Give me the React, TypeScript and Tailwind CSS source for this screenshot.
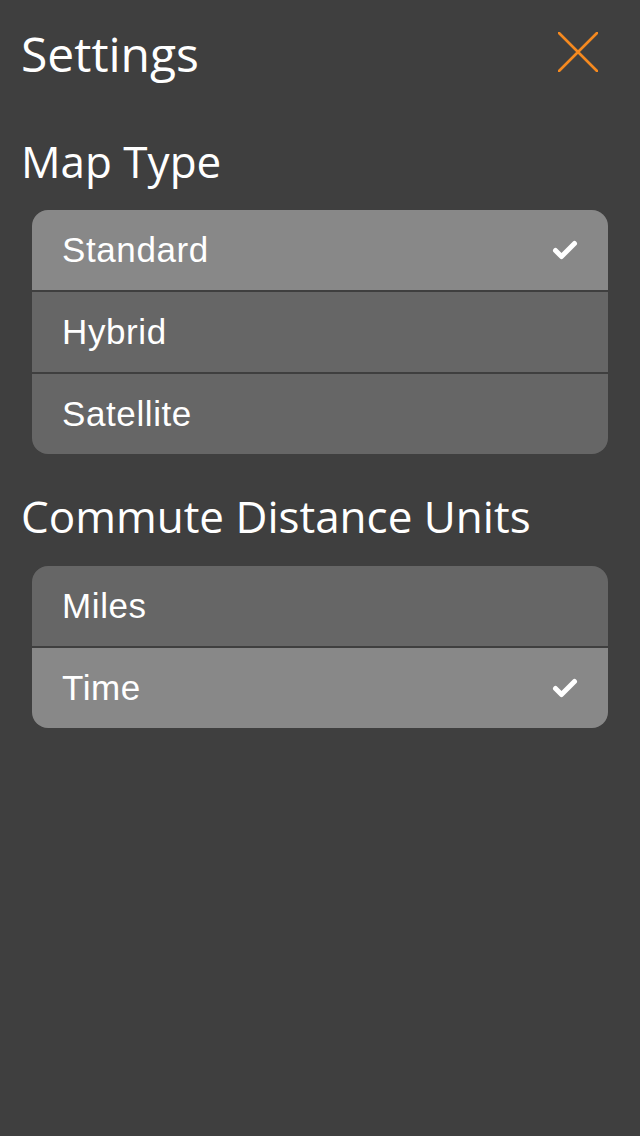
import { useState } from 'react';

const mapTypes = ['Standard', 'Hybrid', 'Satellite'];
const units = ['Miles', 'Time'];

function CheckMark() {
  return (
    <svg width="26" height="20" viewBox="0 0 26 20" fill="none">
      <path
        d="M3.5 10.5 L9.5 16.5 L22.5 3.5"
        stroke="white"
        strokeWidth="5"
        strokeLinecap="round"
        strokeLinejoin="round"
      />
    </svg>
  );
}

function OptionList({
  options,
  selected,
  onSelect,
}: {
  options: string[];
  selected: string;
  onSelect: (v: string) => void;
}) {
  return (
    <div className="mx-[32px] flex flex-col gap-[2px] overflow-hidden rounded-[16px] bg-[#3f3f3f]">
      {options.map((opt) => (
        <button
          key={opt}
          type="button"
          onClick={() => onSelect(opt)}
          className={`flex h-[80px] items-center justify-between pl-[30px] pr-[30px] text-left text-[35px] tracking-[0.6px] text-white ${
            opt === selected ? 'bg-[#888888]' : 'bg-[#666666]'
          }`}
          style={{ fontFamily: '"Liberation Sans", Arial, sans-serif' }}
        >
          <span>{opt}</span>
          {opt === selected && <CheckMark />}
        </button>
      ))}
    </div>
  );
}

export default function App() {
  const [mapType, setMapType] = useState('Standard');
  const [unit, setUnit] = useState('Time');

  return (
    <main
      className="min-h-[1136px] w-full bg-[#3f3f3f] text-white"
      style={{ fontFamily: '"Open Sans", sans-serif' }}
    >
      <header className="flex h-[108px] items-center justify-between pl-[21px] pr-[42px]">
        <h1 className="text-[48px] leading-[48px]">Settings</h1>
        <button type="button" className="-mt-[4px]" aria-label="Close">
          <svg width="40" height="40" viewBox="0 0 40 40">
            <path d="M1 1 L39 39 M39 1 L1 39" stroke="#f5891f" strokeWidth="2.6" strokeLinecap="round" />
          </svg>
        </button>
      </header>

      <h2 className="pl-[21px] pt-[31px] pb-[27px] text-[44px] leading-[44px]">Map Type</h2>
      <OptionList options={mapTypes} selected={mapType} onSelect={setMapType} />

      <h2 className="pl-[21px] pt-[40px] pb-[28px] text-[44px] leading-[44px]">Commute Distance Units</h2>
      <OptionList options={units} selected={unit} onSelect={setUnit} />
    </main>
  );
}
